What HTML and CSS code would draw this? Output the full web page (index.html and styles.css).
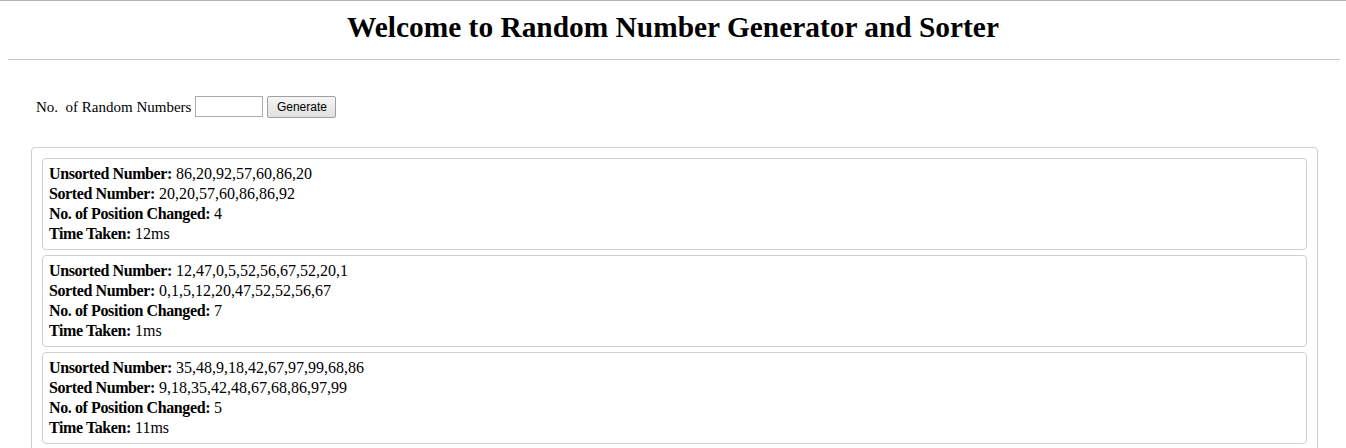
FILE: index.html
```html
<!DOCTYPE html>
<html>
<head>
<meta charset="utf-8">
<title>Random Number Generator and Sorter</title>
<link rel="stylesheet" href="styles.css">
</head>
<body>
<header class="top">
  <h1 class="title">Welcome to Random Number Generator and Sorter</h1>
  <hr class="rule">
</header>
<main class="main">
  <form class="gen-form">
    <label class="gen-label" for="count">No.&nbsp; of Random Numbers</label>
    <input class="gen-input" id="count" type="text">
    <button class="gen-btn" type="button">Generate</button>
  </form>
  <section class="results">
    <div class="card">
      <div class="row"><b>Unsorted Number:</b> 86,20,92,57,60,86,20</div>
      <div class="row"><b>Sorted Number:</b> 20,20,57,60,86,86,92</div>
      <div class="row"><b>No. of Position Changed:</b> 4</div>
      <div class="row"><b>Time Taken:</b> 12ms</div>
    </div>
    <div class="card">
      <div class="row"><b>Unsorted Number:</b> 12,47,0,5,52,56,67,52,20,1</div>
      <div class="row"><b>Sorted Number:</b> 0,1,5,12,20,47,52,52,56,67</div>
      <div class="row"><b>No. of Position Changed:</b> 7</div>
      <div class="row"><b>Time Taken:</b> 1ms</div>
    </div>
    <div class="card">
      <div class="row"><b>Unsorted Number:</b> 35,48,9,18,42,67,97,99,68,86</div>
      <div class="row"><b>Sorted Number:</b> 9,18,35,42,48,67,68,86,97,99</div>
      <div class="row"><b>No. of Position Changed:</b> 5</div>
      <div class="row"><b>Time Taken:</b> 11ms</div>
    </div>
  </section>
</main>
</body>
</html>
```
FILE: styles.css
```css
html, body {
  margin: 0;
  padding: 0;
  background: #fff;
}
body {
  font-family: "Liberation Serif", "Times New Roman", serif;
  font-size: 16px;
  color: #000;
}
.top {
  border-top: 1px solid #b4b4b4;
}
.title {
  margin: 8px 0 0;
  font-size: 29.4px;
  line-height: 37px;
  height: 37px;
  font-weight: bold;
  text-align: center;
}
.rule {
  margin: 13px 6px 0 8px;
  border: 0;
  border-top: 1px solid #c8c8c8;
  height: 0;
}
.main {
  padding: 0 28px 0 31px;
}
.gen-form {
  display: flex;
  align-items: center;
  margin: 36px 0 0 5px;
  height: 22px;
}
.gen-label {
  font-size: 15px;
  margin-right: 4px;
}
.gen-input {
  box-sizing: border-box;
  width: 68px;
  height: 21px;
  border: 1px solid #a5acb2;
  padding: 0 2px;
  margin: 0 4px 0 0;
  font: 13px "Liberation Sans", Arial, sans-serif;
  align-self: flex-start;
}
.gen-btn {
  box-sizing: border-box;
  width: 69px;
  height: 22px;
  margin: 0;
  padding: 0;
  border: 1px solid #a0a0a0;
  border-radius: 2px;
  background: linear-gradient(#f6f6f6, #e0e0e0);
  font: 12px "Liberation Sans", Arial, sans-serif;
  color: #000;
}
.results {
  margin-top: 29px;
  border: 1px solid #cfcfcf;
  border-radius: 4px;
  padding: 10px;
}
.card {
  border: 1px solid #cfcfcf;
  border-radius: 4px;
  padding: 5px 6px;
  margin-bottom: 5px;
}
.row {
  line-height: 20px;
  white-space: nowrap;
}
.row b {
  letter-spacing: -0.4px;
}
```
